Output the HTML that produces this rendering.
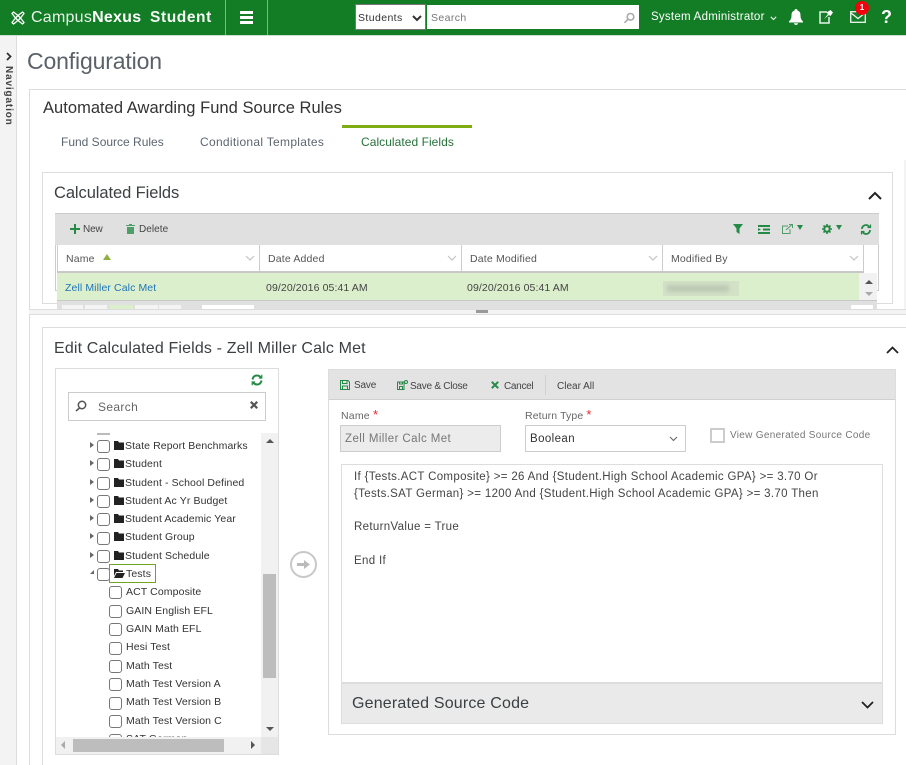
<!DOCTYPE html>
<html><head><meta charset="utf-8"><title>Configuration</title>
<style>
html,body{margin:0;padding:0;background:#fff}
#p{position:relative;width:906px;height:765px;overflow:hidden;background:#fff;font-family:"Liberation Sans",Arial,sans-serif;color:#333}
.a,.t{position:absolute}
.t{white-space:nowrap;line-height:1}
.b{position:absolute;box-sizing:border-box;border:1px solid #ddd}
svg{position:absolute;overflow:visible}
.cb{position:absolute;box-sizing:border-box;width:13px;height:13px;border:1.5px solid #777;border-radius:3px;background:#fff}
.tr{font-size:10.5px;color:#333;letter-spacing:.11px}
.ar{position:absolute;width:0;height:0;border-top:3px solid transparent;border-bottom:3px solid transparent;border-left:4px solid #666}
.hd{font-size:10.5px;color:#555;letter-spacing:.17px}
.tb{font-size:10px;color:#444;letter-spacing:-.15px}
.code{font-size:11.5px;color:#444;letter-spacing:.33px}
</style></head><body><div id="p">

<!-- top bar -->
<div class="a" style="left:0;top:0;width:906px;height:35px;background:#137d26;border-bottom:1px solid #cfe0d2"></div>
<svg style="left:11px;top:11px" width="14" height="14" viewBox="0 0 14 14" fill="none" stroke="#fff" stroke-width="1.3" stroke-linejoin="round"><path d="M2.500 1 7 4.500 11.500 1 13 2.500 9.500 7 13 11.500 11.500 13 7 9.500 2.500 13 1 11.500 4.500 7 1 2.500Z"/><path d="M4.500 7 7 9.500 9.500 7 7 4.500Z"/></svg>
<div class="t" style="left:31px;top:10px;font-size:16px;color:#eaf3ea;letter-spacing:.25px">Campus<b style="color:#fff">Nexus</b></div>
<div class="t" style="left:150px;top:10px;font-size:15.5px;font-weight:bold;color:#f4f8f4;letter-spacing:.6px">Student</div>
<div class="a" style="left:225px;top:0;width:1px;height:35px;background:#7eb58a"></div>
<div class="a" style="left:267px;top:0;width:1px;height:35px;background:#7eb58a"></div>
<div class="a" style="left:240px;top:11px;width:13px;height:3px;background:#fff"></div>
<div class="a" style="left:240px;top:16px;width:13px;height:3px;background:#fff"></div>
<div class="a" style="left:240px;top:21px;width:13px;height:3px;background:#fff"></div>

<div class="a" style="left:355px;top:4px;width:71px;height:26px;box-sizing:border-box;background:#fff;border:1px solid #777"></div>
<div class="t" style="left:358px;top:13px;font-size:10.500px;color:#333;letter-spacing:.4px">Students</div>
<svg style="left:412px;top:15px" width="10" height="7" viewBox="0 0 10 7" fill="none" stroke="#333" stroke-width="2"><path d="M1 1 5 5 9 1"/></svg>
<div class="a" style="left:427px;top:5px;width:212px;height:24px;background:#fff"></div>
<div class="t" style="left:431px;top:13px;font-size:10.500px;color:#777;letter-spacing:.4px">Search</div>
<svg style="left:623px;top:12px" width="12" height="12" viewBox="0 0 12 12" fill="none" stroke="#aaa" stroke-width="1.600"><circle cx="7.500" cy="4.800" r="3.300"/><path d="M5 7.300 1.500 10.800"/></svg>

<div class="t" style="left:651px;top:12px;font-size:11.500px;color:#fff;letter-spacing:.25px">System Administrator</div>
<svg style="left:770px;top:16px" width="7" height="5" viewBox="0 0 7 5" fill="none" stroke="#dfeee1" stroke-width="1.200"><path d="M.8.800 3.500 3.500 6.200.800"/></svg>
<svg style="left:788px;top:9px" width="16" height="16" viewBox="0 0 16 16" fill="#fff"><path d="M8 0C9 0 9.500.8 9.500 1.500 11.800 2.200 12.500 4 12.500 6.500 12.500 9.500 13.500 11 15 12.500V13.500H1V12.500C2.500 11 3.500 9.500 3.500 6.500 3.500 4 4.200 2.200 6.500 1.500 6.500.8 7 0 8 0ZM6 14.300H10C10 15.300 9 16 8 16S6 15.300 6 14.300Z"/></svg>
<svg style="left:819px;top:9px" width="15" height="15" viewBox="0 0 15 15" fill="none"><path d="M8 3H1V14H10V8" stroke="#e8f3e9" stroke-width="1.500"/><path d="M5 10 9 5 7.500 3.500 11.500 1 14 3.500 11.500 7 10 6Z" fill="#fff"/></svg>
<svg style="left:850px;top:11px" width="16" height="12" viewBox="0 0 16 12" fill="none" stroke="#f0f7f1" stroke-width="1.300"><rect x=".7" y=".7" width="14.600" height="10.600"/><path d="M1 2 8 7.500 15 2"/></svg>
<div class="a" style="left:855px;top:1px;width:14px;height:14px;border-radius:50%;background:#f4000c"></div>
<div class="t" style="left:855px;top:4px;width:14px;text-align:center;font-size:8px;color:#fff;font-weight:bold">1</div>
<div class="t" style="left:881px;top:8px;font-size:18px;font-weight:bold;color:#fff">?</div>

<!-- nav strip -->
<div class="a" style="left:0;top:36px;width:16px;height:729px;background:#f3f3f3;border-right:1px solid #ddd"></div>
<svg style="left:6px;top:52px" width="6" height="9" viewBox="0 0 6 9" fill="none" stroke="#333" stroke-width="1.800"><path d="M1 1 4.500 4.500 1 8"/></svg>
<div class="t" style="left:3px;top:66px;font-size:10px;font-weight:bold;color:#444;letter-spacing:.85px;transform-origin:0 0;transform:translateX(10px) rotate(90deg)">Navigation</div>

<div class="t" style="left:27px;top:50px;font-size:23px;color:#5b6169;letter-spacing:-.15px;font-weight:normal">Configuration</div>

<!-- main panel -->
<div class="a" style="left:904px;top:160px;width:2px;height:149px;background:#f3f3f3"></div>
<div class="b" style="left:29px;top:89px;width:890px;height:700px;border-width:1px 0 0 1px"></div>
<div class="t" style="left:43px;top:100px;font-size:16.500px;color:#333;letter-spacing:.03px">Automated Awarding Fund Source Rules</div>
<div class="a" style="left:342px;top:125px;width:130px;height:3px;background:#7ead12"></div>
<div class="t" style="left:61px;top:136px;font-size:12px;color:#5c6570;letter-spacing:0">Fund Source Rules</div>
<div class="t" style="left:200px;top:136px;font-size:12px;color:#5c6570;letter-spacing:.3px">Conditional Templates</div>
<div class="t" style="left:361px;top:136px;font-size:12px;color:#26723a;letter-spacing:.05px">Calculated Fields</div>

<!-- calculated fields panel -->
<div class="b" style="left:42px;top:172px;width:851px;height:132px"></div>
<div class="t" style="left:54px;top:185px;font-size:16.500px;color:#3c4043;letter-spacing:-.08px">Calculated Fields</div>
<svg style="left:868px;top:191px" width="14" height="9" viewBox="0 0 14 9" fill="none" stroke="#222" stroke-width="2"><path d="M1 8 7 2 13 8"/></svg>

<div class="a" style="left:55px;top:213px;width:824px;height:32px;background:#e0e0e0;border-top:1px solid #ccc;box-sizing:border-box"></div>
<div class="a" style="left:55px;top:245px;width:824px;height:46px;box-sizing:border-box;border:1px solid #ccc;border-top:0"></div>
<svg style="left:70px;top:224px" width="10" height="10" viewBox="0 0 10 10" fill="none" stroke="#268a47" stroke-width="2"><path d="M5 0V10M0 5H10"/></svg>
<div class="t tb" style="left:83px;top:225px">New</div>
<svg style="left:126px;top:224px" width="9" height="10" viewBox="0 0 9 10" fill="#4f9e68"><path d="M0 1H3V0H6V1H9V2H0ZM1 3H8V10H1Z"/></svg>
<div class="t tb" style="left:139px;top:225px;letter-spacing:.05px">Delete</div>

<svg style="left:733px;top:224px" width="10" height="10" viewBox="0 0 10 10" fill="#268a47"><path d="M0 0H10L6.500 4.500V10L3.500 8V4.500Z"/></svg>
<svg style="left:758px;top:225px" width="12" height="9" viewBox="0 0 12 9" fill="#268a47"><path d="M0 0H12V2H0ZM5 3.500H12V5.500H5ZM0 7H12V9H0ZM0 3 3 4.500 0 6Z"/></svg>
<svg style="left:782px;top:224px" width="11" height="10" viewBox="0 0 11 10" fill="none" stroke="#4f9e68" stroke-width="1"><path d="M6 2H.5V9.500H8V5M4 6 10 .5M7 .5H10.500V4"/></svg>
<div class="a" style="left:797px;top:225px;border-left:3px solid transparent;border-right:3px solid transparent;border-top:5px solid #268a47"></div>
<svg style="left:822px;top:224px" width="10" height="10" viewBox="0 0 10 10" fill="none" stroke="#268a47"><circle cx="5" cy="5" r="2.700" stroke-width="2"/><path d="M5 0V2M5 8V10M0 5H2M8 5H10M1.500 1.500 3 3M7 7 8.500 8.500M8.500 1.500 7 3M3 7 1.500 8.500" stroke-width="1.600"/></svg>
<div class="a" style="left:836px;top:225px;border-left:3px solid transparent;border-right:3px solid transparent;border-top:5px solid #268a47"></div>
<svg style="left:861px;top:224px" width="10" height="11" viewBox="0 0 10 11" fill="none" stroke="#268a47" stroke-width="1.800"><path d="M1 5C1 2.500 3 1 5 1 6.500 1 7.500 1.800 8.500 3M9 6C9 8.500 7 10 5 10 3.500 10 2.500 9.200 1.500 8"/><path d="M9.500 .5V3.500H6.500M.5 10.500V7.500H3.500" stroke-width="1.200"/></svg>

<!-- grid header -->
<div class="a" style="left:57px;top:245px;width:807px;height:27px;background:#fff;border-left:1px solid #ccc;border-right:1px solid #ccc;box-sizing:border-box"></div>
<div class="a" style="left:259px;top:245px;width:1px;height:27px;background:#ccc"></div>
<div class="a" style="left:461px;top:245px;width:1px;height:27px;background:#ccc"></div>
<div class="a" style="left:662px;top:245px;width:1px;height:27px;background:#ccc"></div>
<div class="a" style="left:57px;top:271px;width:807px;height:2px;background:#c8c8c8"></div>
<div class="t hd" style="left:66px;top:254px">Name</div>
<div class="a" style="left:103px;top:254px;border-left:4px solid transparent;border-right:4px solid transparent;border-bottom:6px solid #8fb040"></div>
<div class="t hd" style="left:268px;top:254px">Date Added</div>
<div class="t hd" style="left:470px;top:254px">Date Modified</div>
<div class="t hd" style="left:671px;top:254px">Modified By</div>
<svg style="left:245px;top:255px" width="10" height="6" viewBox="0 0 10 6" fill="none" stroke="#c4c4c4" stroke-width="1.200"><path d="M1 1 5 5 9 1"/></svg>
<svg style="left:447px;top:255px" width="10" height="6" viewBox="0 0 10 6" fill="none" stroke="#c4c4c4" stroke-width="1.200"><path d="M1 1 5 5 9 1"/></svg>
<svg style="left:648px;top:255px" width="10" height="6" viewBox="0 0 10 6" fill="none" stroke="#c4c4c4" stroke-width="1.200"><path d="M1 1 5 5 9 1"/></svg>
<svg style="left:849px;top:255px" width="10" height="6" viewBox="0 0 10 6" fill="none" stroke="#c4c4c4" stroke-width="1.200"><path d="M1 1 5 5 9 1"/></svg>

<!-- row -->
<div class="a" style="left:57px;top:273px;width:802px;height:27px;background:#dcefcd"></div>
<div class="a" style="left:859px;top:273px;width:18px;height:28px;background:#f1f1f1"></div>
<div class="a" style="left:865px;top:280px;border-left:4px solid transparent;border-right:4px solid transparent;border-bottom:4px solid #555"></div>
<div class="a" style="left:865px;top:292px;border-left:4px solid transparent;border-right:4px solid transparent;border-top:4px solid #aaa"></div>
<div class="t" style="left:65px;top:283px;font-size:10.500px;color:#1f74b8;letter-spacing:.1px">Zell Miller Calc Met</div>
<div class="t" style="left:266px;top:283px;font-size:10.500px;color:#444;letter-spacing:.1px">09/20/2016 05:41 AM</div>
<div class="t" style="left:467px;top:283px;font-size:10.500px;color:#444;letter-spacing:.1px">09/20/2016 05:41 AM</div>
<div class="a" style="left:663px;top:281px;width:76px;height:15px;background:#d3e2c7"></div>
<div class="a" style="left:667px;top:285px;width:62px;height:7px;background:#bcc8b4;filter:blur(2px)"></div>

<!-- pager -->
<div class="a" style="left:57px;top:300px;width:820px;height:9px;background:#e0e0e0;border-top:1px solid #c8c8c8;box-sizing:border-box"></div>
<div class="a" style="left:62px;top:305px;width:21px;height:4px;background:#f4f4f4"></div>
<div class="a" style="left:85px;top:305px;width:22px;height:4px;background:#f4f4f4"></div>
<div class="a" style="left:110px;top:305px;width:23px;height:4px;background:#dcefcd"></div>
<div class="a" style="left:135px;top:305px;width:23px;height:4px;background:#f4f4f4"></div>
<div class="a" style="left:159px;top:305px;width:22px;height:4px;background:#f4f4f4"></div>
<div class="a" style="left:202px;top:305px;width:52px;height:4px;background:#fff"></div>
<div class="a" style="left:851px;top:305px;width:22px;height:4px;background:#fff"></div>

<!-- splitter -->
<div class="a" style="left:29px;top:309px;width:877px;height:6px;box-sizing:border-box;background:#f3f3f3;border-top:1px solid #ddd;border-bottom:1px solid #ddd"></div>
<div class="a" style="left:476px;top:310px;width:12px;height:3px;background:#999"></div>
<div class="a" style="left:29px;top:315px;width:877px;height:450px;background:#fff;border-left:1px solid #ddd;box-sizing:border-box"></div>

<!-- edit panel -->
<div class="b" style="left:42px;top:327px;width:880px;height:460px"></div>
<div class="t" style="left:54px;top:341px;font-size:16px;color:#3c4043;letter-spacing:.15px">Edit Calculated Fields - Zell Miller Calc Met</div>
<svg style="left:886px;top:346px" width="13" height="8" viewBox="0 0 13 8" fill="none" stroke="#222" stroke-width="1.800"><path d="M1 7 6.500 1.500 12 7"/></svg>

<!-- tree box -->
<div class="b" style="left:55px;top:368px;width:224px;height:387px"></div>
<svg style="left:251px;top:374px" width="12" height="12" viewBox="0 0 12 12" fill="none" stroke="#268a47" stroke-width="2"><path d="M1.500 5.500C2 3 3.500 1.500 6 1.500 7.500 1.500 9 2.300 10 3.500M10.500 6.500C10 9 8.500 10.500 6 10.500 4.500 10.500 3 9.700 2 8.500"/><path d="M10.800 .8V4H7.800M1.200 11.200V8H4.200" stroke-width="1.200"/></svg>
<div class="b" style="left:68px;top:392px;width:198px;height:29px;border-color:#ccc"></div>
<svg style="left:75px;top:400px" width="12" height="12" viewBox="0 0 12 12" fill="none" stroke="#555" stroke-width="1.500"><circle cx="7" cy="5" r="3.700"/><path d="M4.500 8 1 11"/></svg>
<div class="t" style="left:98px;top:401px;font-size:12px;color:#666;letter-spacing:.35px">Search</div>
<svg style="left:250px;top:401px" width="8" height="8" viewBox="0 0 8 8" fill="none" stroke="#555" stroke-width="2.200"><path d="M.8.800 7.200 7.200M7.200.8.800 7.200"/></svg>

<!-- tree rows -->
<div class="a" style="left:97px;top:433px;width:13px;height:2px;background:#bbb"></div>

<div class="ar" style="left:90px;top:442px"></div><div class="cb" style="left:97px;top:440px"></div>
<svg style="left:114px;top:441px" width="10" height="9" viewBox="0 0 10 9" fill="#222"><path d="M0 0H4L5 1.500H10V9H0Z"/></svg>
<div class="t tr" style="left:125px;top:441px">State Report Benchmarks</div>

<div class="ar" style="left:90px;top:460px"></div><div class="cb" style="left:97px;top:458px"></div>
<svg style="left:114px;top:459px" width="10" height="9" viewBox="0 0 10 9" fill="#222"><path d="M0 0H4L5 1.500H10V9H0Z"/></svg>
<div class="t tr" style="left:125px;top:459px">Student</div>

<div class="ar" style="left:90px;top:479px"></div><div class="cb" style="left:97px;top:477px"></div>
<svg style="left:114px;top:478px" width="10" height="9" viewBox="0 0 10 9" fill="#222"><path d="M0 0H4L5 1.500H10V9H0Z"/></svg>
<div class="t tr" style="left:125px;top:478px">Student - School Defined</div>

<div class="ar" style="left:90px;top:497px"></div><div class="cb" style="left:97px;top:495px"></div>
<svg style="left:114px;top:496px" width="10" height="9" viewBox="0 0 10 9" fill="#222"><path d="M0 0H4L5 1.500H10V9H0Z"/></svg>
<div class="t tr" style="left:125px;top:496px">Student Ac Yr Budget</div>

<div class="ar" style="left:90px;top:515px"></div><div class="cb" style="left:97px;top:513px"></div>
<svg style="left:114px;top:514px" width="10" height="9" viewBox="0 0 10 9" fill="#222"><path d="M0 0H4L5 1.500H10V9H0Z"/></svg>
<div class="t tr" style="left:125px;top:514px">Student Academic Year</div>

<div class="ar" style="left:90px;top:533px"></div><div class="cb" style="left:97px;top:532px"></div>
<svg style="left:114px;top:532px" width="10" height="9" viewBox="0 0 10 9" fill="#222"><path d="M0 0H4L5 1.500H10V9H0Z"/></svg>
<div class="t tr" style="left:125px;top:532px">Student Group</div>

<div class="ar" style="left:90px;top:552px"></div><div class="cb" style="left:97px;top:550px"></div>
<svg style="left:114px;top:551px" width="10" height="9" viewBox="0 0 10 9" fill="#222"><path d="M0 0H4L5 1.500H10V9H0Z"/></svg>
<div class="t tr" style="left:125px;top:551px">Student Schedule</div>

<div class="a" style="left:90px;top:570px;border-left:4px solid transparent;border-bottom:4px solid #666"></div>
<div class="cb" style="left:97px;top:568px"></div>
<div class="a" style="left:109px;top:564px;width:47px;height:19px;box-sizing:border-box;border:1px solid #6fa51f;background:#fff"></div>
<svg style="left:114px;top:569px" width="11" height="9" viewBox="0 0 11 9" fill="#222"><path d="M0 0H4L5 1.500H9V3H2L0 7ZM2.500 4H11L8.500 9H0Z"/></svg>
<div class="t tr" style="left:126px;top:569px">Tests</div>

<div class="cb" style="left:109px;top:586px"></div><div class="t tr" style="left:126px;top:587px">ACT Composite</div>
<div class="cb" style="left:109px;top:605px"></div><div class="t tr" style="left:126px;top:606px">GAIN English EFL</div>
<div class="cb" style="left:109px;top:623px"></div><div class="t tr" style="left:126px;top:624px">GAIN Math EFL</div>
<div class="cb" style="left:109px;top:642px"></div><div class="t tr" style="left:126px;top:642px">Hesi Test</div>
<div class="cb" style="left:109px;top:660px"></div><div class="t tr" style="left:126px;top:661px">Math Test</div>
<div class="cb" style="left:109px;top:678px"></div><div class="t tr" style="left:126px;top:679px">Math Test Version A</div>
<div class="cb" style="left:109px;top:697px"></div><div class="t tr" style="left:126px;top:697px">Math Test Version B</div>
<div class="cb" style="left:109px;top:715px"></div><div class="t tr" style="left:126px;top:716px">Math Test Version C</div>
<div class="a" style="left:56px;top:730px;width:205px;height:7px;overflow:hidden;background:transparent">
<div class="cb" style="left:53px;top:4px"></div><div class="t tr" style="left:70px;top:4px">SAT German</div></div>

<!-- tree scrollbars -->
<div class="a" style="left:261px;top:433px;width:17px;height:321px;background:#f1f1f1"></div>
<div class="a" style="left:263px;top:574px;width:13px;height:104px;background:#bdbdbd"></div>
<div class="a" style="left:266px;top:439px;border-left:4px solid transparent;border-right:4px solid transparent;border-bottom:4px solid #555"></div>
<div class="a" style="left:266px;top:727px;border-left:4px solid transparent;border-right:4px solid transparent;border-top:4px solid #555"></div>
<div class="a" style="left:56px;top:737px;width:222px;height:17px;background:#f1f1f1"></div>
<div class="a" style="left:73px;top:739px;width:151px;height:13px;background:#bdbdbd"></div>
<div class="a" style="left:61px;top:741px;border-top:4px solid transparent;border-bottom:4px solid transparent;border-right:4px solid #aaa"></div>
<div class="a" style="left:251px;top:741px;border-top:4px solid transparent;border-bottom:4px solid transparent;border-left:4px solid #555"></div>
<div class="a" style="left:261px;top:737px;width:17px;height:17px;background:#e6e6e6"></div>

<!-- transfer button -->
<div class="a" style="left:290px;top:551px;width:27px;height:27px;box-sizing:border-box;border:2px solid #c8c8c8;border-radius:50%;background:#fff"></div>
<svg style="left:297px;top:559px" width="13" height="11" viewBox="0 0 13 11" fill="#bbb"><path d="M0 4H7V1L13 5.500 7 10V7H0Z"/></svg>

<!-- right box -->
<div class="b" style="left:328px;top:369px;width:568px;height:366px"></div>
<div class="a" style="left:329px;top:370px;width:566px;height:30px;background:#e3e3e3;border-bottom:1px solid #d0d0d0;box-sizing:border-box"></div>
<svg style="left:340px;top:380px" width="10" height="10" viewBox="0 0 10 10" fill="none" stroke="#268a47" stroke-width="1"><path d="M.5.500H8L9.500 2V9.500H.5ZM2.500.5V3.500H7V.5M2.500 9.500V6H7.500V9.500"/></svg>
<div class="t tb" style="left:354px;top:381px">Save</div>
<svg style="left:397px;top:380px" width="11" height="10" viewBox="0 0 11 10" fill="none" stroke="#268a47" stroke-width="1"><path d="M.5 2H7V9.500H.5ZM2.500 2V4H5.500V2M2.500 9.500V6.500H5.500V9.500"/><circle cx="9" cy="2" r="1.500"/></svg>
<div class="t tb" style="left:410px;top:382px;letter-spacing:-.25px">Save &amp; Close</div>
<svg style="left:491px;top:381px" width="8" height="8" viewBox="0 0 8 8" fill="none" stroke="#268a47" stroke-width="2"><path d="M.8.800 7.200 7.200M7.200.8.800 7.200"/></svg>
<div class="t tb" style="left:504px;top:382px;letter-spacing:-.3px">Cancel</div>
<div class="a" style="left:545px;top:375px;width:1px;height:20px;background:#d0d0d0"></div>
<div class="t tb" style="left:557px;top:382px;letter-spacing:0">Clear All</div>

<div class="t" style="left:341px;top:408px;font-size:10.500px;color:#666;letter-spacing:.2px">Name <span style="color:#e8262a;font-size:13px">*</span></div>
<div class="t" style="left:525px;top:408px;font-size:10.500px;color:#666;letter-spacing:.12px">Return Type <span style="color:#e8262a;font-size:13px">*</span></div>
<div class="a" style="left:340px;top:425px;width:161px;height:27px;box-sizing:border-box;background:#ececec;border:1px solid #ccc"></div>
<div class="t" style="left:345px;top:434px;font-size:11.500px;color:#777;letter-spacing:.42px">Zell Miller Calc Met</div>
<div class="a" style="left:525px;top:425px;width:161px;height:27px;box-sizing:border-box;background:#fff;border:1px solid #ccc"></div>
<div class="t" style="left:530px;top:434px;font-size:11.500px;color:#333;letter-spacing:.4px">Boolean</div>
<svg style="left:669px;top:436px" width="9" height="6" viewBox="0 0 9 6" fill="none" stroke="#666" stroke-width="1.100"><path d="M1 1 4.500 4.500 8 1"/></svg>
<div class="a" style="left:710px;top:428px;width:15px;height:15px;box-sizing:border-box;border:2px solid #ccc;background:#fff"></div>
<div class="t" style="left:730px;top:431px;font-size:10px;color:#777;letter-spacing:.3px">View Generated Source Code</div>

<div class="a" style="left:341px;top:464px;width:542px;height:260px;box-sizing:border-box;border:1px solid #ddd;background:#fff"></div>
<div class="t code" style="left:354px;top:472px">If {Tests.ACT Composite} &gt;= 26 And {Student.High School Academic GPA} &gt;= 3.70 Or</div>
<div class="t code" style="left:354px;top:489px">{Tests.SAT German} &gt;= 1200 And {Student.High School Academic GPA} &gt;= 3.70 Then</div>
<div class="t code" style="left:354px;top:522px">ReturnValue = True</div>
<div class="t code" style="left:354px;top:556px">End If</div>

<div class="a" style="left:341px;top:682px;width:542px;height:42px;box-sizing:border-box;background:#eaeaea;border:1px solid #ddd;border-top:2px solid #ddd"></div>
<div class="t" style="left:352px;top:696px;font-size:16px;color:#3c4043;letter-spacing:.18px">Generated Source Code</div>
<svg style="left:861px;top:701px" width="13" height="8" viewBox="0 0 13 8" fill="none" stroke="#222" stroke-width="1.800"><path d="M1 1 6.500 6.500 12 1"/></svg>

</div></body></html>
